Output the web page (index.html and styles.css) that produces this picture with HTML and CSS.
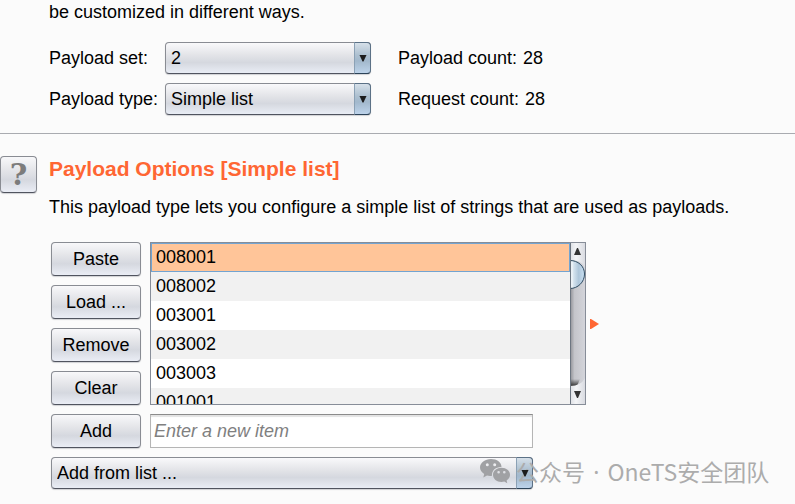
FILE: index.html
```html
<!DOCTYPE html>
<html lang="en">
<head>
<meta charset="utf-8">
<title>Payloads</title>
<link rel="stylesheet" href="styles.css">
</head>
<body>
<main>
  <section class="sets">
    <p class="intro">be customized in different ways.</p>
    <div class="set-grid">
      <label for="payload-set">Payload set:</label>
      <div class="combo">
        <select id="payload-set"><option>2</option></select>
        <span class="combo-arrow"><svg viewBox="0 0 8 7"><path d="M0.500 0H7.500L4.500 6.500H3.500Z"/></svg></span>
      </div>
      <dl class="count"><dt>Payload count:</dt><dd>28</dd></dl>
      <label for="payload-type">Payload type:</label>
      <div class="combo">
        <select id="payload-type"><option>Simple list</option></select>
        <span class="combo-arrow"><svg viewBox="0 0 8 7"><path d="M0.500 0H7.500L4.500 6.500H3.500Z"/></svg></span>
      </div>
      <dl class="count"><dt>Request count:</dt><dd>28</dd></dl>
    </div>
  </section>

  <section class="options">
    <button class="btn help" type="button">?</button>
    <div class="options-body">
      <h2>Payload Options [Simple list]</h2>
      <p class="description">This payload type lets you configure a simple list of strings that are used as payloads.</p>
      <div class="editor">
        <div class="list-row">
          <div class="actions">
            <button class="btn" type="button">Paste</button>
            <button class="btn" type="button">Load ...</button>
            <button class="btn" type="button">Remove</button>
            <button class="btn" type="button">Clear</button>
          </div>
          <div class="list">
            <ul class="items">
              <li class="selected">008001</li>
              <li>008002</li>
              <li>003001</li>
              <li>003002</li>
              <li>003003</li>
              <li>001001</li>
            </ul>
            <svg class="scrollbar" viewBox="0 0 15 161">
              <defs>
                <linearGradient id="track"><stop offset="0" stop-color="#8e8f94"/><stop offset=".3" stop-color="#c4c5ca"/><stop offset="1" stop-color="#d3d4da"/></linearGradient>
                <linearGradient id="cap"><stop offset="0" stop-color="#dcdee3"/><stop offset=".4" stop-color="#f4f5f7"/><stop offset="1" stop-color="#d9dbe1"/></linearGradient>
                <linearGradient id="thumb"><stop offset="0" stop-color="#a9bfd3"/><stop offset=".12" stop-color="#f4f8fb"/><stop offset=".25" stop-color="#d5e3ee"/><stop offset=".6" stop-color="#aec6da"/><stop offset="1" stop-color="#c9e0f2"/></linearGradient>
                <linearGradient id="shade" x2="0" y2="1"><stop offset="0" stop-color="#333" stop-opacity="0"/><stop offset="1" stop-color="#333"/></linearGradient>
              </defs>
              <path fill="url(#track)" d="M0 0H15V161H0Z"/>
              <path fill="url(#shade)" d="M0 136H10L7 143H0Z"/>
              <path fill="url(#cap)" d="M0 0H15V24Q11 17 0 17Z"/>
              <path fill="url(#cap)" d="M15 135Q11 143 0 143V161H15Z"/>
              <path fill="url(#thumb)" stroke="#2f4c63" d="M0 17.500C8 17.500 14.500 23 14.500 31S8 45.500 0 45.500"/>
              <path fill="#333" d="M7 5H8L11 12H4Z"/>
              <path fill="#333" d="M4 148H11L8 155H7Z"/>
              <path fill="none" stroke="#6d7681" d="M0.500 0V161"/>
            </svg>
          </div>
          <svg class="marker" viewBox="0 0 9 10"><path d="M0 0H1L9 5L1 10H0Z"/></svg>
        </div>
        <div class="add-row">
          <button class="btn" type="button">Add</button>
          <input type="text" placeholder="Enter a new item" aria-label="New item">
        </div>
        <div class="combo from-list">
          <select aria-label="Add from list"><option>Add from list ...</option></select>
          <span class="combo-arrow"><svg viewBox="0 0 8 7"><path d="M0.500 0H7.500L4.500 6.500H3.500Z"/></svg></span>
          <div class="watermark">
            <svg viewBox="0 0 30 25">
              <path fill-rule="evenodd" d="M11 0C17 0 21.500 3.500 21.500 8C15 8 11.500 12 12 16.800C10 17.200 8.500 17 7 16.500L3.300 18.500L4.200 15C1.500 13.300 0 11 0 8.500C0 3.800 5 0 11 0ZM7.300 4.300A1.500 1.500 0 1 0 7.300 7.300A1.500 1.500 0 1 0 7.300 4.300ZM14.700 4.300A1.500 1.500 0 1 0 14.700 7.300A1.500 1.500 0 1 0 14.700 4.300Z"/>
              <path fill-rule="evenodd" d="M21.500 8.800C26.300 8.800 30 12 30 15.700C30 18 28.700 20 26.600 21.400L27.300 24.200L24.300 22.600C18 24 13 20.500 13 15.700C13 12 16.800 8.800 21.500 8.800ZM18.600 12A1.300 1.300 0 1 0 18.600 14.600A1.300 1.300 0 1 0 18.600 12ZM24.300 12A1.300 1.300 0 1 0 24.300 14.600A1.300 1.300 0 1 0 24.300 12Z"/>
            </svg>
            <span lang="zh">公众号 <span class="dot">·</span> OneTS安全团队</span>
          </div>
        </div>
      </div>
    </div>
  </section>
</main>
</body>
</html>
```
FILE: styles.css
```css
* {
  box-sizing: border-box;
}

body {
  margin: 0;
  background: #fbfbfb;
  color: #000;
  font: 18px/20px "Liberation Sans", Arial, sans-serif;
}

p, h2, dl, dd, ul {
  margin: 0;
  padding: 0;
}

button, input, select {
  font: inherit;
  color: inherit;
}

.sets {
  padding: 2px 0 18px 49px;
  border-bottom: 1px solid #a9abb0;
}

.intro {
  margin-bottom: 20px;
}

.set-grid {
  display: grid;
  grid-template-columns: 116px 206px auto;
  justify-content: start;
  align-items: center;
  row-gap: 9px;
}

.count {
  display: flex;
  gap: 6px;
  margin-left: 27px;
}

.combo {
  position: relative;
  height: 32px;
}

.combo select {
  appearance: none;
  display: block;
  width: 100%;
  height: 100%;
  padding: 0 24px 0 5px;
  border: 1px solid #898c93;
  border-bottom-color: #50545f;
  border-radius: 4px;
  background: linear-gradient(#f9f9fb, #e3e4e8 40%, #d5d8df 65%, #e9edf5);
  box-shadow: 0 1px 1px #d0d1d4;
}

.combo-arrow {
  position: absolute;
  top: 0;
  right: 0;
  bottom: 0;
  display: flex;
  align-items: center;
  justify-content: center;
  width: 17px;
  border: 1px solid #5b7186;
  border-left-color: #8ba1b5;
  border-bottom-color: #2c4358;
  border-radius: 0 4px 4px 0;
  background: linear-gradient(#d6e0e9, #adc0d0 40%, #a2b8cc 60%, #bdd3ea);
  pointer-events: none;
}

.combo-arrow svg {
  width: 8px;
  height: 7px;
  fill: #1c1c1c;
}

.options {
  display: flex;
  align-items: flex-start;
  gap: 12px;
  padding: 22px 0 15px;
}

.btn {
  height: 34px;
  padding: 0;
  border: 1px solid #898c93;
  border-bottom-color: #50545f;
  border-radius: 4px;
  background: linear-gradient(#f8f8fa, #e3e4e8 40%, #d5d8df 65%, #eaedf5);
  box-shadow: 0 1px 1px #d0d1d4;
}

.help {
  flex: none;
  width: 37px;
  height: 37px;
  color: #7c7c7c;
  font: bold 30px/34px "DejaVu Serif", serif;
}

.options-body {
  flex: 1;
  min-width: 0;
}

h2 {
  color: #ff6633;
  font-size: 21px;
  line-height: 26px;
}

.description {
  margin: 15px 0 25px;
}

.editor {
  display: flex;
  flex-direction: column;
  gap: 9px;
  max-width: 550px;
  padding-left: 2px;
}

.list-row {
  display: flex;
  align-items: center;
}

.actions {
  display: grid;
  gap: 9px;
  width: 90px;
  margin-right: 9px;
}

.list {
  display: flex;
  flex: 1;
  height: 163px;
  border: 1px solid #878d98;
  align-self: flex-start;
}

.items {
  flex: 1;
  overflow: hidden;
  background: #fff;
  list-style: none;
}

.items li {
  height: 29px;
  padding: 0 5px;
  line-height: 29px;
}

.items li:nth-child(even) {
  background: #f1f1f1;
}

.items .selected {
  padding: 0 4px;
  border: 1px solid #73a4d1;
  background: #ffc599;
  line-height: 27px;
}

.scrollbar {
  width: 15px;
  height: 161px;
}

.marker {
  width: 9px;
  height: 10px;
  margin-left: 4px;
  fill: #ff6633;
}

.add-row {
  display: grid;
  grid-template-columns: 90px 1fr;
  gap: 9px;
  max-width: 482px;
}

.add-row input {
  width: 100%;
  min-width: 0;
  padding: 0 3px;
  border: 1px solid #b5b5b5;
  border-top-color: #8b8b8b;
  background: #fff;
  box-shadow: inset 0 2px 1px #e3e3e3;
}

.add-row input::placeholder {
  color: #808080;
  font-style: italic;
}

.from-list {
  max-width: 482px;
}

.from-list .combo-arrow svg {
  z-index: 1;
}

.watermark {
  position: absolute;
  top: 0;
  left: 429px;
  display: flex;
  align-items: center;
  gap: 6px;
  height: 28px;
  color: #acacac;
  font: 23px/28px "Noto Sans CJK SC", sans-serif;
  white-space: nowrap;
  pointer-events: none;
}

.watermark .dot {
  margin: 0 3px;
  font-family: "Noto Sans", sans-serif;
}

.watermark svg {
  width: 30px;
  height: 25px;
  fill: #a0a1a4;
}
```
